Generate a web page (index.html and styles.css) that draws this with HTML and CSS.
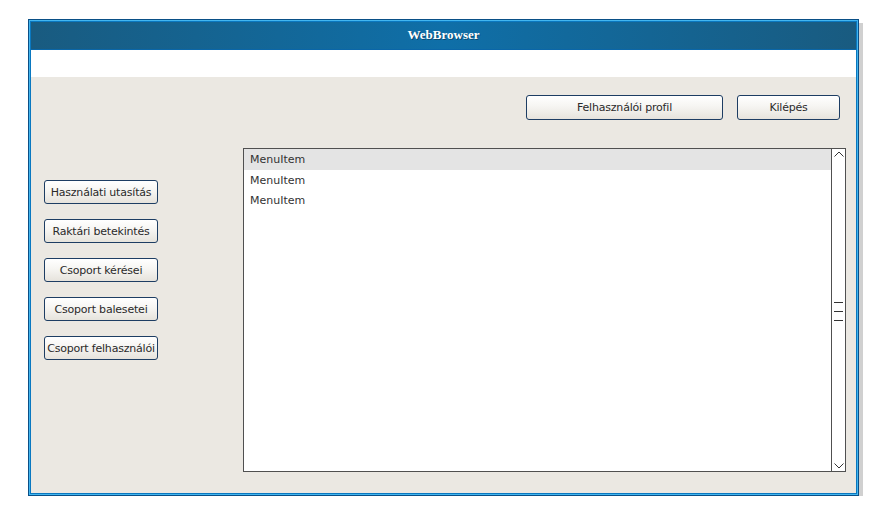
FILE: index.html
```html
<!DOCTYPE html>
<html>
<head>
<meta charset="utf-8">
<link rel="stylesheet" href="styles.css">
</head>
<body>
<div class="window">
  <div class="titlebar">WebBrowser</div>
  <div class="addressbar"></div>
  <div class="content">
    <div class="toprow">
      <button class="btn btn-profile">Felhasználói profil</button>
      <button class="btn btn-exit">Kilépés</button>
    </div>
    <div class="main">
      <div class="sidebar">
        <button class="btn side">Használati utasítás</button>
        <button class="btn side">Raktári betekintés</button>
        <button class="btn side">Csoport kérései</button>
        <button class="btn side">Csoport balesetei</button>
        <button class="btn side">Csoport felhasználói</button>
      </div>
      <div class="list">
        <div class="items">
          <div class="item selected">MenuItem</div>
          <div class="item">MenuItem</div>
          <div class="item">MenuItem</div>
        </div>
        <div class="scrollbar">
          <svg class="arrow" width="12" height="8" viewBox="0 0 12 8"><path d="M1.5 6.5 L6 2 L10.5 6.5" fill="none" stroke="#333" stroke-width="1"/></svg>
          <div class="grip"><span></span><span></span><span></span></div>
          <svg class="arrow" width="12" height="8" viewBox="0 0 12 8"><path d="M1.5 1.5 L6 6 L10.5 1.5" fill="none" stroke="#333" stroke-width="1"/></svg>
        </div>
      </div>
    </div>
  </div>
</div>
</body>
</html>
```

FILE: styles.css
```css
html, body {
  margin: 0;
  padding: 0;
  background: #ffffff;
}
body {
  padding: 19px 0 0 28px;
}
.window {
  width: 831px;
  height: 477px;
  box-sizing: border-box;
  border: 1px solid #0a4f86;
  padding: 2px;
  box-shadow: inset 0 0 0 1px #42b6f0, inset 0 0 0 2px #0a78c0, 4px 4px 0 #d0d0d0;
  display: flex;
  flex-direction: column;
  background: #0a78c0;
}
.titlebar {
  height: 27px;
  flex: none;
  background: linear-gradient(to right, #195b80 0%, #0f6fa8 50%, #195b80 100%);
  border-bottom: 1px solid #0a66a8;
  color: #ffffff;
  font-family: "Liberation Serif", serif;
  font-weight: bold;
  font-size: 13px;
  line-height: 25px;
  text-align: center;
  text-shadow: 1px 1px 0 rgba(0,0,0,0.35);
}
.addressbar {
  height: 27px;
  flex: none;
  background: #ffffff;
}
.content {
  flex: 1;
  background: #ebe8e2;
  padding: 18px 16px 0 13px;
  display: flex;
  flex-direction: column;
}
.toprow {
  display: flex;
  justify-content: flex-end;
  gap: 14px;
  height: 25px;
}
.btn {
  box-sizing: border-box;
  margin: 0;
  padding: 0;
  border: 1px solid #1d3d63;
  border-radius: 3px;
  background: linear-gradient(to bottom, #ffffff 0%, #f6f5f2 45%, #e6e3dc 100%);
  font-family: "DejaVu Sans", sans-serif;
  font-size: 11px;
  color: #2a2a2a;
  text-align: center;
  letter-spacing: -0.2px;
}
.btn-profile {
  width: 197px;
  height: 25px;
}
.btn-exit {
  width: 103px;
  height: 25px;
}
.main {
  display: flex;
  margin-top: 28px;
}
.sidebar {
  flex: none;
  width: 114px;
  margin-top: 32px;
  display: flex;
  flex-direction: column;
  gap: 15px;
}
.side {
  width: 114px;
  height: 24px;
}
.list {
  flex: none;
  margin-left: 85px;
  width: 603px;
  height: 324px;
  box-sizing: border-box;
  border: 1px solid #505050;
  background: #ffffff;
  display: flex;
}
.items {
  flex: 1;
}
.item {
  height: 20px;
  line-height: 21px;
  padding-left: 6px;
  font-family: "DejaVu Sans", sans-serif;
  font-size: 11px;
  color: #333333;
}
.item.selected {
  height: 21px;
  background: #e4e4e4;
}
.scrollbar {
  width: 13px;
  border-left: 1px solid #505050;
  display: flex;
  flex-direction: column;
  align-items: center;
  justify-content: space-between;
  padding: 1px 0 1px;
}
.arrow {
  display: block;
}
.grip {
  display: flex;
  flex-direction: column;
  gap: 8px;
  width: 9px;
  margin-top: 2px;
}
.grip span {
  display: block;
  height: 1px;
  background: #333333;
}
```
